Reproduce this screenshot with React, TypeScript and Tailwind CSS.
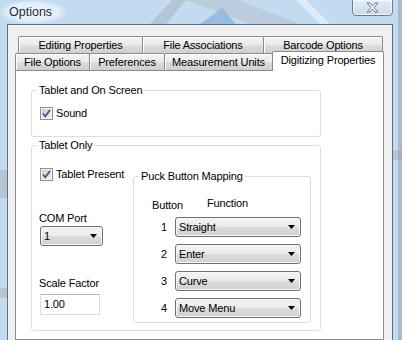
import React from "react"

// windows 7 style "Options" dialog, digitizing page

const btnGrad = "bg-[linear-gradient(#f3f3f3,#ebebeb_48%,#dddddd_52%,#cfcfcf)]"

function Tab({ label, w, first }: { label: string; w: string; first?: boolean }) {
  return (
    <div
      className={`${w} ${first ? "" : "-ml-px"} h-[17px] flex items-center justify-center border border-b-0 border-[#898c95] rounded-t-[2px] ${btnGrad} shadow-[inset_1px_1px_0_#fff]`}
    >
      {label}
    </div>
  )
}

function Check({ label }: { label: string }) {
  return (
    <div className="flex items-center gap-[3px] h-[13px] whitespace-nowrap">
      <div className="shrink-0 w-[13px] h-[13px] border border-[#8e8f8f] bg-[linear-gradient(135deg,#c8c8c8,#f4f4f4)] shadow-[inset_0_0_0_1px_#f4f4f4] flex items-center justify-center">
        <svg width="11" height="11" viewBox="0 0 11 11">
          <path d="M2 5.5 L4.3 8.3 L9 2" fill="none" stroke="#3d5a96" strokeWidth="1.8" />
        </svg>
      </div>
      <span>{label}</span>
    </div>
  )
}

function Combo({ value, w }: { value: string; w: string }) {
  return (
    <div
      className={`${w} h-[20px] flex items-center justify-between rounded-[3px] border border-[#707070] ${btnGrad} shadow-[inset_0_0_0_1px_#f8f8f8]`}
    >
      <span className="pl-[3px]">{value}</span>
      <svg width="7" height="4" viewBox="0 0 7 4" className="mr-[5px]">
        <path d="M0 0h7L3.5 4z" fill="#000" />
      </svg>
    </div>
  )
}

function Group({ title, className, children }: { title: string; className: string; children?: React.ReactNode }) {
  return (
    <fieldset className={`border border-[#d5dfe5] rounded-[3px] ${className}`}>
      <legend className="ml-[5px] px-[2px] leading-[13px]">{title}</legend>
      {children}
    </fieldset>
  )
}

export default function App() {
  const puck = ["Straight", "Enter", "Curve", "Move Menu"]
  return (
    <div className="relative w-[402px] h-[340px] overflow-hidden bg-[#c2dbf0] text-[11px] tracking-[-0.15px] text-black font-['Liberation_Sans',Arial,sans-serif]">
      {/* glass behind the frame */}
      <svg className="absolute inset-0" width="402" height="340">
        <polygon points="150,24 172,0 186,0 166,24" fill="#a9b3bd" opacity="0.55" />
        <polygon points="186,0 238,0 300,24 250,24" fill="#b3bcc5" opacity="0.45" />
        <polygon points="200,24 222,8 236,24" fill="#8db5de" opacity="0.8" />
        <polygon points="296,0 306,0 330,24 320,24" fill="#e8f2fb" opacity="0.7" />
        <rect x="0" y="170" width="7" height="28" fill="#b0b8c0" opacity="0.6" />
        <rect x="0" y="288" width="7" height="10" fill="#b0b8c0" opacity="0.6" />
        <rect x="393" y="150" width="9" height="10" fill="#b0b8c0" opacity="0.6" />
        <rect x="398" y="0" width="4" height="340" fill="#9aa3ab" opacity="0.6" />
      </svg>

      {/* title bar */}
      <div className="relative flex h-[24px] items-start">
        <div className="h-[24px] pl-[9px] pr-[14px] flex items-center rounded-full bg-[radial-gradient(ellipse_at_center,rgba(255,255,255,0.85),rgba(255,255,255,0.5)_55%,rgba(255,255,255,0)_75%)]">
          <span className="text-[12.5px] tracking-normal text-[#1b2b40]">Options</span>
        </div>
        <div className="ml-auto mr-[9px] -mt-px w-[41px] h-[17px] flex items-center justify-center rounded-b-[4px] border border-[#6d7b8b] bg-[linear-gradient(#e3eef8,#c9dbeb)] shadow-[inset_0_0_0_1px_rgba(255,255,255,0.7)]">
          <svg width="13" height="11" viewBox="0 0 13 11">
            <path
              d="M1 1h3l2.5 3L9 1h3L8 5.5 12 10H9L6.5 7 4 10H1l4-4.5z"
              fill="#fff"
              stroke="#6b7480"
              strokeWidth="1"
              strokeLinejoin="round"
            />
          </svg>
        </div>
      </div>

      {/* body */}
      <div className="relative flex h-[316px]">
        <div className="w-[7px]" />
        <div className="w-[386px] flex flex-col border-l border-t border-r border-[#5d7085] bg-[#f0f0f0] pl-[7px] pr-[8px] pt-[11px]">
          {/* tab rows */}
          <div className="flex h-[17px] pl-[3px]">
            <Tab label="Editing Properties" w="w-[125px]" first />
            <Tab label="File Associations" w="w-[122px]" />
            <Tab label="Barcode Options" w="w-[120px]" />
          </div>
          <div className="flex h-[17px] items-end">
            <Tab label="File Options" w="w-[75px]" first />
            <Tab label="Preferences" w="w-[76px]" />
            <Tab label="Measurement Units" w="w-[109px]" />
            <div className="relative z-10 -ml-px -mb-px w-[112px] h-[20px] flex items-center justify-center pb-[2px] border border-b-0 border-[#898c95] rounded-t-[2px] bg-white">
              Digitizing Properties
            </div>
          </div>

          {/* page */}
          <div className="flex-1 border border-[#898c95] bg-white pl-[15px] pt-[13px]">
            <Group title="Tablet and On Screen" className="w-[290px] h-[53px]">
              <div className="mt-[10px] pl-[8px]">
                <Check label="Sound" />
              </div>
            </Group>

            <Group title="Tablet Only" className="mt-[2px] w-[290px] h-[192px]">
              <div className="flex pl-[8px] pt-[16px]">
                <div className="w-[85px] flex flex-col">
                  <Check label="Tablet Present" />
                  <div className="mt-[31px] -ml-px leading-[13px]">COM Port</div>
                  <div className="mt-[1px]">
                    <Combo value="1" w="w-[63px]" />
                  </div>
                  <div className="mt-[31px] -ml-px leading-[13px]">Scale Factor</div>
                  <div className="mt-[4px] w-[60px] h-[21px] flex items-center pl-[3px] border border-[#d9dde3] border-t-[#b5b8bf]">
                    1.00
                  </div>
                </div>

                <Group title="Puck Button Mapping" className="ml-[8px] mt-[2px] w-[178px] h-[153px]">
                  <div className="flex items-start mt-[14px] pl-[18px] leading-[13px]">
                    <span className="pt-[2px]">Button</span>
                    <span className="ml-[24px]">Function</span>
                  </div>
                  <div className="mt-[5px] flex flex-col gap-[7px]">
                    {puck.map((p, i) => (
                      <div key={p} className="flex items-center">
                        <span className="w-[33px] text-right">{i + 1}</span>
                        <div className="ml-[8px]">
                          <Combo value={p} w="w-[126px]" />
                        </div>
                      </div>
                    ))}
                  </div>
                </Group>
              </div>
            </Group>
          </div>
        </div>
        <div className="w-[9px]" />
      </div>
    </div>
  )
}
